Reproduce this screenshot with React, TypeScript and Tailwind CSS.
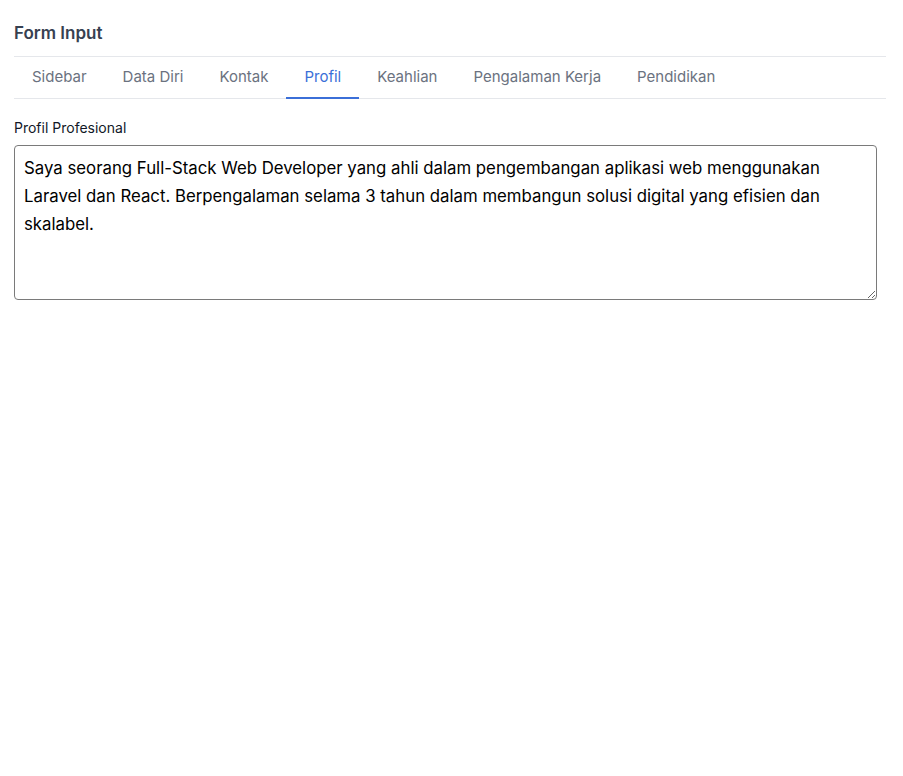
import { useState } from "react";

const tabs = [
  "Sidebar",
  "Data Diri",
  "Kontak",
  "Profil",
  "Keahlian",
  "Pengalaman Kerja",
  "Pendidikan",
];

const App = () => {
  const [active, setActive] = useState("Profil");
  const [profil, setProfil] = useState(
    "Saya seorang Full-Stack Web Developer yang ahli dalam pengembangan aplikasi web menggunakan Laravel dan React. Berpengalaman selama 3 tahun dalam membangun solusi digital yang efisien dan skalabel."
  );

  return (
    <div className="min-h-screen bg-white font-['Inter',sans-serif]">
      <div className="pl-[14px] pr-[17px] pt-[22px]">
        <h2 className="text-[17px] font-semibold text-[#374151] leading-[22px] pb-[12px] border-b border-[#e5e7eb]">
          Form Input
        </h2>

        {/* tabs */}
        <div className="flex border-b border-[#e5e7eb]">
          {tabs.map((tab) => (
            <button
              key={tab}
              onClick={() => setActive(tab)}
              className={`px-[18px] h-[42px] text-[15px] border-b-2 -mb-px ${
                active === tab
                  ? "text-[#3b6fd8] border-[#3b6fd8]"
                  : "text-[#6b7280] border-transparent"
              }`}
            >
              {tab}
            </button>
          ))}
        </div>

        {/* profil */}
        <div className="pt-[19px]">
          <label className="block text-[14px] text-[#111827] leading-[20px] mb-[7px]">
            Profil Profesional
          </label>
          <textarea
            value={profil}
            onChange={(e) => setProfil(e.target.value)}
            className="block w-[863px] h-[155px] border border-[#7a7a7a] rounded-[4px] px-[9px] py-[8px] text-[16.8px] leading-[28px] text-black outline-none resize-y"
          />
        </div>
      </div>
    </div>
  );
};

export default App;
